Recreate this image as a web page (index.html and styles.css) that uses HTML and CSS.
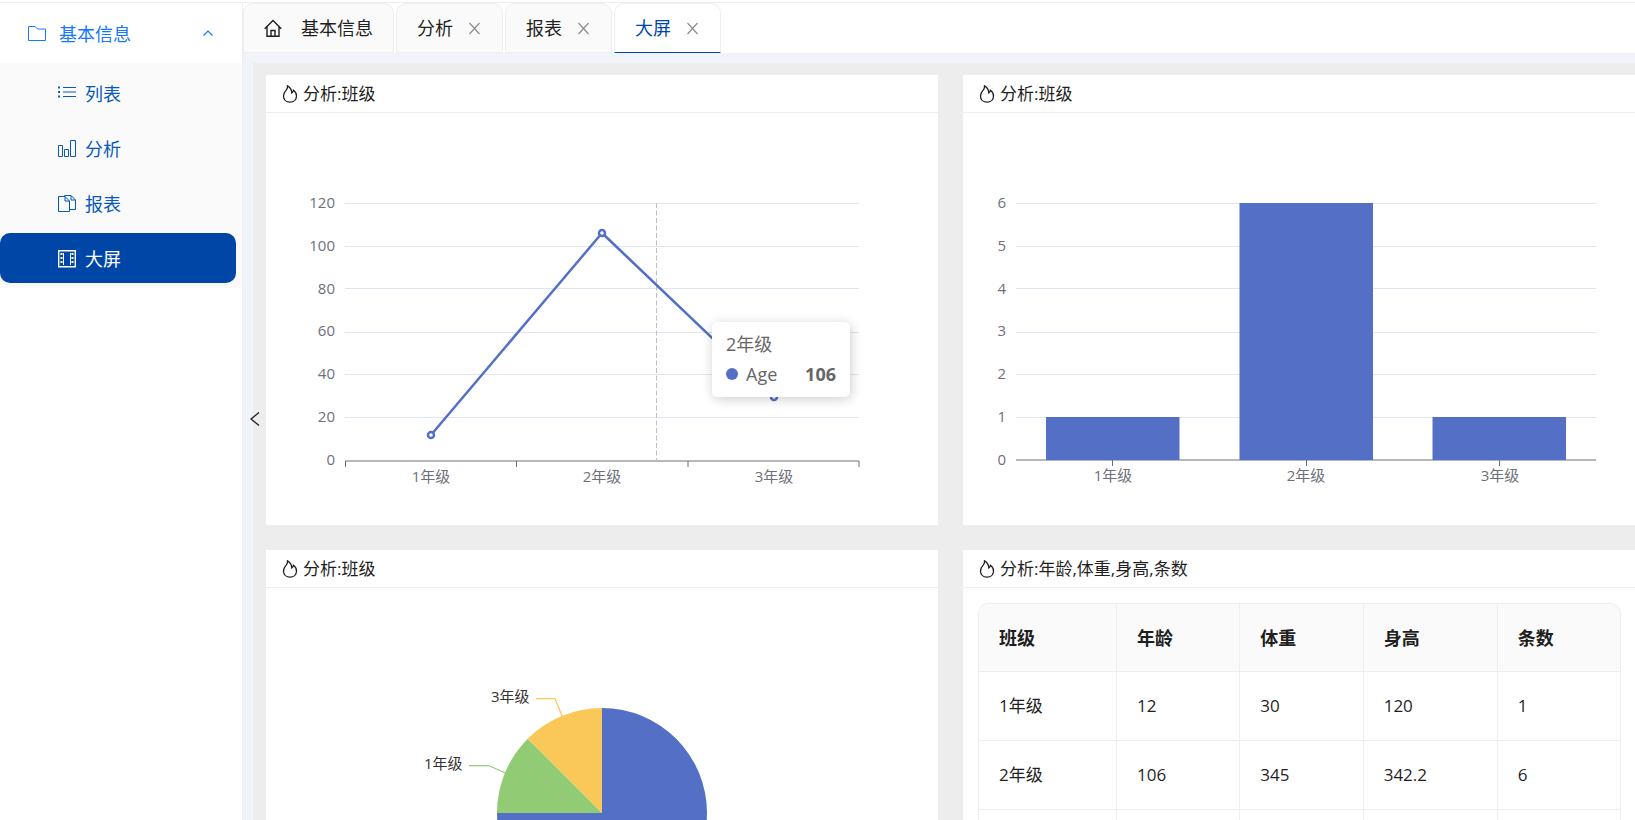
FILE: index.html
```html
<!DOCTYPE html>
<html lang="zh-CN">
<head>
<meta charset="utf-8">
<title>大屏</title>
<link rel="stylesheet" href="styles.css">
</head>
<body>
<svg class="defs" aria-hidden="true">
  <symbol id="fire" viewBox="0 0 18 18"><path d="M9 17.2c-4 0-6.500-2.700-6.500-6.300 0-3 1.600-4.500 2.900-6.100C6.300 3.600 6.700 2.600 6.500.9c2.600 1.500 4.200 3.700 4.300 7 1-.6 1.500-1.400 1.600-2.600 2 1.400 3.100 3.200 3.100 5.600 0 3.600-2.500 6.300-6.500 6.300z"/></symbol>
  <symbol id="close" viewBox="0 0 15 15"><path d="M2.500 2l10 11M12.500 2l-10 11"/></symbol>
</svg>
<div class="app">
  <nav class="sidebar">
    <button class="group" type="button" aria-expanded="true">
      <svg class="icon" viewBox="0 0 18 18"><path d="M.5 1.500h6.500l2.500 2.500h8v11.500h-17z"/></svg>
      <span class="group-name">基本信息</span>
      <svg class="chevron" viewBox="0 0 12 12"><path d="M1.500 7.500L6 3l4.500 4.500"/></svg>
    </button>
    <div class="submenu">
      <a class="item" href="#list"><svg class="icon" viewBox="0 0 18 18"><path d="M5 2.500h13M5 7h13M5 11.500h13"/><path class="dots" d="M0 2.500h2M0 7h2M0 11.500h2"/></svg>列表</a>
      <a class="item" href="#analysis"><svg class="icon" viewBox="0 0 18 18"><path d="M.5 5.500h4v11h-4zM6.500 9.500h4v7h-4zM12.500.5h5v16h-5z"/></svg>分析</a>
      <a class="item" href="#report"><svg class="icon" viewBox="0 0 18 18"><path d="M.5 1.500h6.500l4.500 4.500v10.500H.5zM7 1.500V6h4.500M6.500 1.500v-1h6.500l4.500 4.500v9.500h-6M13 .5V5h4.500"/></svg>报表</a>
      <a class="item active" href="#screen" aria-current="page"><svg class="icon" viewBox="0 0 18 18"><path class="frame" d="M.7.700h16.600v16H.7z"/><path d="M5.500 3v12M12.500 3v12"/><path class="holes" d="M3.500 3v12M14.500 3v12"/></svg>大屏</a>
    </div>
  </nav>
  <div class="main">
    <div class="tabs">
      <a class="tab home" href="#home"><svg class="icon" viewBox="0 0 18 18"><path d="M.7 9.800L9 1.500l8.300 8.300M3 8v9.300h12V8M7 17v-5.500h4V17"/></svg>基本信息</a>
      <div class="tab"><a href="#analysis">分析</a><button type="button" aria-label="关闭分析"><svg><use href="#close"/></svg></button></div>
      <div class="tab"><a href="#report">报表</a><button type="button" aria-label="关闭报表"><svg><use href="#close"/></svg></button></div>
      <div class="tab current"><a href="#screen">大屏</a><button type="button" aria-label="关闭大屏"><svg><use href="#close"/></svg></button></div>
    </div>
    <div class="content">
      <button class="collapse" type="button" aria-label="收起菜单"><svg viewBox="0 0 10 16"><path d="M9 1.500L1 8l8 6.500"/></svg></button>
      <div class="board">
        <section class="card">
          <h2 class="card-title"><svg><use href="#fire"/></svg>分析:班级</h2>
          <div class="body">
            <svg class="chart" viewBox="0 0 672 412">
              <path class="grid" d="M79 90.500h514M79 133.500h514M79 175.500h514M79 219.500h514M79 261.500h514M79 304.500h514"/>
              <path class="axis" d="M79 348h514M79.500 348v6M250.500 348v6M422 348v6M593 348v6"/>
              <path class="pointer" d="M390.500 90v258"/>
              <g class="label end"><text x="69" y="95">120</text><text x="69" y="138">100</text><text x="69" y="181">80</text><text x="69" y="223">60</text><text x="69" y="266">40</text><text x="69" y="309">20</text><text x="69" y="352">0</text></g>
              <g class="label mid"><text x="165" y="369">1年级</text><text x="336" y="369">2年级</text><text x="508" y="369">3年级</text></g>
              <path class="line" d="M165 322L336 120L508 284"/>
              <g class="point"><circle cx="165" cy="322" r="3"/><circle cx="336" cy="120" r="3"/><circle cx="508" cy="284" r="3"/></g>
            </svg>
            <div class="tooltip">
              <div>2年级</div>
              <div class="series"><i class="dot"></i><span>Age</span><b>106</b></div>
            </div>
          </div>
        </section>
        <section class="card">
          <h2 class="card-title"><svg><use href="#fire"/></svg>分析:班级</h2>
          <div class="body">
            <svg class="chart" viewBox="0 0 672 412">
              <path class="grid" d="M53 90.500h580M53 133.500h580M53 175.500h580M53 219.500h580M53 261.500h580M53 304.500h580"/>
              <path class="axis" d="M53 347h580M149.500 347v6M343.500 347v6M536.500 347v6"/>
              <path class="bar" d="M83 304h133.500v43H83zM276.500 90H410v257H276.500zM469.500 304H603v43H469.500z"/>
              <g class="label end"><text x="43" y="95">6</text><text x="43" y="138">5</text><text x="43" y="181">4</text><text x="43" y="223">3</text><text x="43" y="266">2</text><text x="43" y="309">1</text><text x="43" y="352">0</text></g>
              <g class="label mid"><text x="150" y="368">1年级</text><text x="343" y="368">2年级</text><text x="537" y="368">3年级</text></g>
            </svg>
          </div>
        </section>
        <section class="card">
          <h2 class="card-title"><svg><use href="#fire"/></svg>分析:班级</h2>
          <div class="body">
            <svg class="chart" viewBox="0 0 672 412">
              <path class="bar" d="M336 225V120A105 105 0 1 1 231 225z"/>
              <path class="green" d="M336 225H231A105 105 0 0 1 261.750 150.750z"/>
              <path class="yellow" d="M336 225L261.750 150.750A105 105 0 0 1 336 120z"/>
              <path class="lead green-line" d="M203 177.500h19.500l17 7.500"/>
              <path class="lead yellow-line" d="M270 110.500h19l7 17.500"/>
              <g class="label dark"><text x="225" y="114">3年级</text><text x="158" y="181">1年级</text></g>
            </svg>
          </div>
        </section>
        <section class="card">
          <h2 class="card-title"><svg><use href="#fire"/></svg>分析:年龄,体重,身高,条数</h2>
          <div class="body table-body">
            <table>
              <colgroup><col class="wide"><col><col><col class="medium"><col></colgroup>
              <thead><tr><th scope="col">班级</th><th scope="col">年龄</th><th scope="col">体重</th><th scope="col">身高</th><th scope="col">条数</th></tr></thead>
              <tbody>
                <tr><td>1年级</td><td>12</td><td>30</td><td>120</td><td>1</td></tr>
                <tr><td>2年级</td><td>106</td><td>345</td><td>342.2</td><td>6</td></tr>
                <tr><td></td><td></td><td></td><td></td><td></td></tr>
              </tbody>
            </table>
          </div>
        </section>
      </div>
    </div>
  </div>
</div>
</body>
</html>
```
FILE: styles.css
```css
* { box-sizing: border-box; }
body {
  margin: 0;
  background: #fff;
  color: #1f1f1f;
  font: 18px/28px "Open Sans", "Noto Sans CJK SC", sans-serif;
}
a { color: inherit; text-decoration: none; }
button { border: 0; padding: 0; background: none; font: inherit; color: inherit; cursor: pointer; }
svg { fill: none; stroke: currentColor; display: block; flex: none; }
.defs { position: absolute; width: 0; height: 0; }

.app {
  display: flex;
  height: 100vh;
  padding-top: 2px;
  overflow: hidden;
}
.icon { width: 18px; height: 18px; }

.sidebar {
  flex: none;
  width: 243px;
  border-top: 1px solid #eee;
  border-right: 1px solid #eee;
}
.group {
  display: flex;
  align-items: center;
  width: 100%;
  height: 60px;
  padding: 2px 28px 0;
  color: #1677ff;
  text-align: left;
}
.group-name { flex: 1; margin-left: 13px; }
.chevron { width: 12px; height: 12px; stroke-width: 1.2; }
.submenu {
  display: flex;
  flex-direction: column;
  gap: 5px;
  padding: 5px 6px 5px 0;
  background: #fafafa;
}
.item {
  display: flex;
  align-items: center;
  gap: 9px;
  height: 50px;
  padding: 2px 0 0 58px;
  border-radius: 10px;
  color: #0958b9;
}
.item.active { background: #0046a6; color: #fff; }
.dots { stroke-width: 2; }
.frame { stroke-width: 1.4; }
.holes { stroke-width: 2; stroke-dasharray: 2 2; }

.main { flex: 1; min-width: 0; display: flex; flex-direction: column; border-top: 1px solid #eee; }
.tabs { display: flex; gap: 2px; flex: none; height: 50px; }
.tab {
  display: flex;
  align-items: center;
  gap: 14px;
  padding: 0 20px;
  border: 1px solid #eee;
  border-radius: 10px 10px 0 0;
  background: #fafafa;
}
.tab.home { gap: 19px; }
.home .icon { stroke-width: 1.4; }
.tab.current { background: #fff; color: #0046a6; border-bottom-color: #0046a6; }
.tab button { color: #8c8c8c; }
.tab button svg { width: 15px; height: 15px; stroke-width: 1.2; }

.content {
  position: relative;
  flex: 1;
  min-height: 0;
  padding: 10px 0 0 10px;
  background: #f0f4f8;
}
.collapse { position: absolute; z-index: 1; left: 7px; top: 50%; width: 10px; margin-top: -26px; }
.collapse svg { width: 10px; height: 16px; stroke-width: 1.4; }
.board {
  display: grid;
  grid-template-columns: 1fr 1fr;
  align-content: start;
  gap: 25px;
  height: 100%;
  padding: 12px 0 0 13px;
  overflow: auto;
  scrollbar-width: none;
  background: #ededed;
}
.card { background: #fff; min-width: 0; min-height: 450px; }
.card-title {
  display: flex;
  align-items: center;
  gap: 4px;
  height: 38px;
  margin: 0;
  padding-left: 15px;
  border-bottom: 1px solid #eee;
  font-size: 17px;
  font-weight: 400;
}
.card-title svg { width: 18px; height: 18px; stroke-width: 1.3; }
.body { position: relative; }
.chart { width: 100%; height: 412px; }

.grid { stroke: #e0e6f1; }
.axis { stroke: #6e7079; }
.pointer { stroke: #b9bec9; stroke-dasharray: 5 2.5; }
.line { stroke: #5470c6; stroke-width: 2.5; stroke-linejoin: bevel; }
.point { fill: #fff; stroke: #5470c6; stroke-width: 2.5; }
.bar { fill: #5470c6; stroke: none; }
.green { fill: #91cc75; stroke: none; }
.yellow { fill: #fac858; stroke: none; }
.lead { stroke-width: 1.25; }
.green-line { stroke: #91cc75; }
.yellow-line { stroke: #fac858; }
.label { fill: #6e7079; stroke: none; font-size: 15px; }
.label.dark { fill: #333; }
.end { text-anchor: end; }
.mid { text-anchor: middle; }

.tooltip {
  position: absolute;
  left: 446px;
  top: 209px;
  width: 138px;
  padding: 8px 14px 9px;
  border-radius: 5px;
  background: #fff;
  box-shadow: 1px 2px 12px rgba(0, 0, 0, .2);
  color: #666;
}
.series { display: flex; align-items: center; gap: 8px; margin-top: 2px; }
.series b { margin-left: auto; }
.dot { width: 12px; height: 12px; border-radius: 50%; background: #5470c6; }

.table-body { padding: 15px 14px 15px 15px; }
table {
  width: 100%;
  table-layout: fixed;
  border-collapse: separate;
  border-spacing: 0;
  border: 1px solid #eee;
  border-width: 1px 0 0 1px;
  border-radius: 10px 10px 0 0;
  font-size: 17px;
}
.wide { width: 138px; }
.medium { width: 134px; }
th, td {
  height: 69px;
  padding: 0 20px;
  border: 1px solid #eee;
  border-width: 0 1px 1px 0;
  text-align: left;
}
th { height: 68px; background: #fafafa; font-size: 18px; font-weight: 700; }
th:first-child { border-top-left-radius: 10px; }
th:last-child { border-top-right-radius: 10px; }
```
